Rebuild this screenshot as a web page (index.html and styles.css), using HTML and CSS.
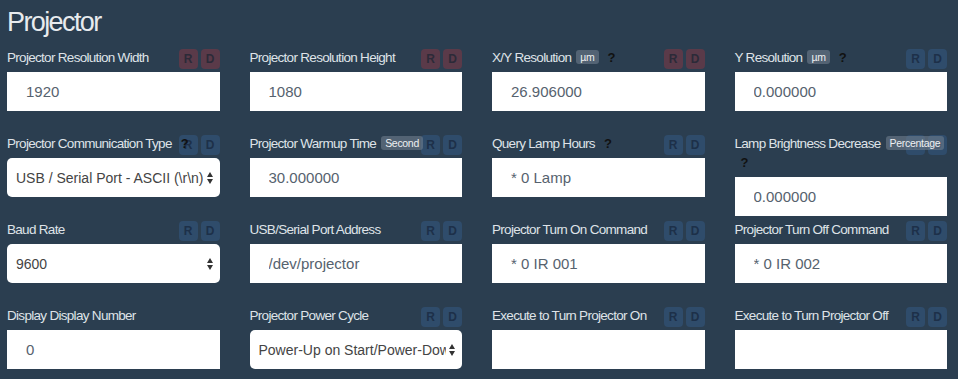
FILE: index.html
```html
<!DOCTYPE html>
<html lang="en">
<head>
  <meta charset="UTF-8">
  <title>Projector Settings</title>
  <link rel="stylesheet" href="styles.css">
</head>
<body>
  <div class="page">
    <h2 class="title">Projector</h2>
    <div class="grid">

      <div class="field">
        <label class="field-label">Projector Resolution Width</label>
        <div class="rd rd-warn"><span class="rd-btn">R</span><span class="rd-btn">D</span></div>
        <input class="field-input" type="text" value="1920">
      </div>
      <div class="field">
        <label class="field-label">Projector Resolution Height</label>
        <div class="rd rd-warn"><span class="rd-btn">R</span><span class="rd-btn">D</span></div>
        <input class="field-input" type="text" value="1080">
      </div>
      <div class="field">
        <label class="field-label">X/Y Resolution <span class="unit">µm</span> <span class="help">?</span></label>
        <div class="rd rd-warn"><span class="rd-btn">R</span><span class="rd-btn">D</span></div>
        <input class="field-input" type="text" value="26.906000">
      </div>
      <div class="field">
        <label class="field-label">Y Resolution <span class="unit">µm</span> <span class="help">?</span></label>
        <div class="rd"><span class="rd-btn">R</span><span class="rd-btn">D</span></div>
        <input class="field-input" type="text" value="0.000000">
      </div>

      <div class="field">
        <label class="field-label">Projector Communication Type <span class="help">?</span></label>
        <div class="rd"><span class="rd-btn">R</span><span class="rd-btn">D</span></div>
        <div class="select-wrap">
          <select class="field-select">
            <option>USB / Serial Port - ASCII (\r\n)</option>
          </select>
        </div>
      </div>
      <div class="field">
        <label class="field-label">Projector Warmup Time <span class="unit">Second</span></label>
        <div class="rd"><span class="rd-btn">R</span><span class="rd-btn">D</span></div>
        <input class="field-input" type="text" value="30.000000">
      </div>
      <div class="field">
        <label class="field-label">Query Lamp Hours <span class="help">?</span></label>
        <div class="rd"><span class="rd-btn">R</span><span class="rd-btn">D</span></div>
        <input class="field-input" type="text" value="* 0 Lamp">
      </div>
      <div class="field">
        <label class="field-label">Lamp Brightness Decrease <span class="unit">Percentage</span> <span class="help">?</span></label>
        <div class="rd"><span class="rd-btn">R</span><span class="rd-btn">D</span></div>
        <input class="field-input" type="text" value="0.000000">
      </div>

      <div class="field">
        <label class="field-label">Baud Rate</label>
        <div class="rd"><span class="rd-btn">R</span><span class="rd-btn">D</span></div>
        <div class="select-wrap">
          <select class="field-select">
            <option>9600</option>
          </select>
        </div>
      </div>
      <div class="field">
        <label class="field-label">USB/Serial Port Address</label>
        <div class="rd"><span class="rd-btn">R</span><span class="rd-btn">D</span></div>
        <input class="field-input" type="text" value="/dev/projector">
      </div>
      <div class="field">
        <label class="field-label">Projector Turn On Command</label>
        <div class="rd"><span class="rd-btn">R</span><span class="rd-btn">D</span></div>
        <input class="field-input" type="text" value="* 0 IR 001">
      </div>
      <div class="field">
        <label class="field-label">Projector Turn Off Command</label>
        <div class="rd"><span class="rd-btn">R</span><span class="rd-btn">D</span></div>
        <input class="field-input" type="text" value="* 0 IR 002">
      </div>

      <div class="field">
        <label class="field-label">Display Display Number</label>
        <input class="field-input" type="text" value="0">
      </div>
      <div class="field">
        <label class="field-label">Projector Power Cycle</label>
        <div class="rd"><span class="rd-btn">R</span><span class="rd-btn">D</span></div>
        <div class="select-wrap">
          <select class="field-select">
            <option>Power-Up on Start/Power-Down on Exit</option>
          </select>
        </div>
      </div>
      <div class="field">
        <label class="field-label">Execute to Turn Projector On</label>
        <div class="rd"><span class="rd-btn">R</span><span class="rd-btn">D</span></div>
        <input class="field-input" type="text" value="">
      </div>
      <div class="field">
        <label class="field-label">Execute to Turn Projector Off</label>
        <div class="rd"><span class="rd-btn">R</span><span class="rd-btn">D</span></div>
        <input class="field-input" type="text" value="">
      </div>

    </div>
  </div>
</body>
</html>
```

FILE: styles.css
```css
body {
  margin: 0;
  background-color: #2b3e50;
  font-family: "Liberation Sans", Arial, sans-serif;
  color: #dfe3e8;
}
.page {
  padding: 0 11px 0 7px;
}
.title {
  margin: 0 0 4px;
  font-size: 27px;
  font-weight: normal;
  line-height: 44px;
  letter-spacing: -1.6px;
  color: #e8ebee;
}
.grid {
  display: grid;
  grid-template-columns: repeat(4, 1fr);
  grid-auto-rows: 63px;
  column-gap: 30px;
  row-gap: 23px;
}
.field {
  position: relative;
  display: flex;
  flex-direction: column;
  min-height: 0;
}
.field-label {
  position: relative;
  z-index: 1;
  display: block;
  margin-bottom: 5px;
  font-size: 13.5px;
  line-height: 19px;
  letter-spacing: -0.7px;
}
.unit {
  display: inline-block;
  padding: 0 4px;
  margin-left: 2px;
  border-radius: 3px;
  background: rgba(110,125,140,0.6);
  color: #eef0f2;
  font-size: 10.5px;
  line-height: 14px;
  letter-spacing: -0.3px;
  vertical-align: 1px;
}
.help {
  margin-left: 6px;
  color: #111;
  font-weight: bold;
  font-size: 13px;
  letter-spacing: 0;
}
.rd {
  position: absolute;
  top: 1px;
  right: 0;
  display: flex;
  gap: 3px;
}
.rd-btn {
  width: 19px;
  height: 20px;
  border-radius: 4px;
  background: #2f4c6b;
  color: #1d3049;
  font-size: 12px;
  font-weight: bold;
  line-height: 21px;
  text-align: center;
}
.rd-warn .rd-btn {
  background: #5a3a49;
  color: #2c2a38;
}
.field-input {
  flex: none;
  box-sizing: border-box;
  width: 100%;
  height: 39px;
  padding: 0 10px 0 19px;
  border: 0;
  border-radius: 0;
  background: #fff;
  color: #56626e;
  font-family: "Liberation Sans", Arial, sans-serif;
  font-size: 15px;
}
.select-wrap {
  position: relative;
  flex: none;
}
.select-wrap::before,
.select-wrap::after {
  content: "";
  position: absolute;
  right: 7px;
  border-left: 3px solid transparent;
  border-right: 3px solid transparent;
  pointer-events: none;
}
.select-wrap::before {
  top: 14px;
  border-bottom: 5px solid #333;
}
.select-wrap::after {
  top: 21px;
  border-top: 5px solid #333;
}
.field-select {
  -webkit-appearance: none;
  appearance: none;
  box-sizing: border-box;
  width: 100%;
  height: 39px;
  padding: 0 16px 0 9px;
  border: 0;
  border-radius: 5px;
  background: #fff;
  color: #444;
  font-family: "Liberation Sans", Arial, sans-serif;
  font-size: 14px;
}
```
